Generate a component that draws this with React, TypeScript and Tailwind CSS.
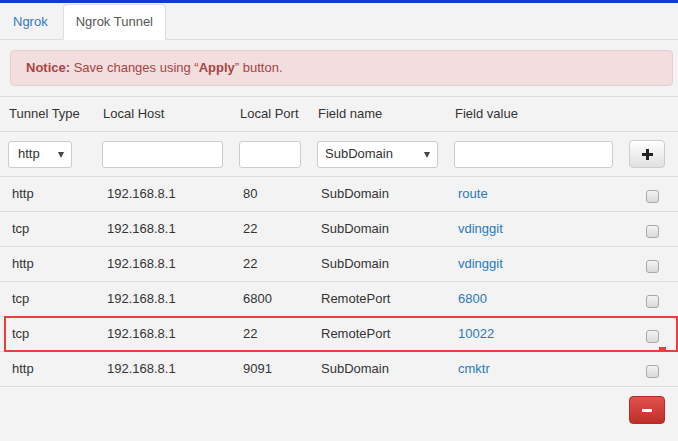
import React from "react";

const rows = [
  ["http", "192.168.8.1", "80", "SubDomain", "route"],
  ["tcp", "192.168.8.1", "22", "SubDomain", "vdinggit"],
  ["http", "192.168.8.1", "22", "SubDomain", "vdinggit"],
  ["tcp", "192.168.8.1", "6800", "RemotePort", "6800"],
  ["tcp", "192.168.8.1", "22", "RemotePort", "10022"],
  ["http", "192.168.8.1", "9091", "SubDomain", "cmktr"],
];

function Arrow() {
  return (
    <svg width="6" height="6" viewBox="0 0 6 6" className="absolute right-[7px] top-[10px]">
      <path d="M0 0 L6 0 L3 6 Z" fill="#444" />
    </svg>
  );
}

function Checkbox() {
  return (
    <div className="w-[13px] h-[13px] rounded-[3px] border border-[#a9a9a9] bg-gradient-to-b from-[#f4f4f4] to-[#d9d9d9] ml-[25px] mt-[4px]" />
  );
}

export default function App() {
  return (
    <div
      className="w-[678px] h-[441px] bg-[#f3f3f3] text-[#333] text-[13px] overflow-hidden"
      style={{ fontFamily: '"Liberation Sans", Arial, sans-serif' }}
    >
      <div className="h-[3px] bg-[#0c3fc8]" />
      {/* tabs */}
      <div className="flex items-end h-[37px] pt-[1px] border-b border-[#dddddd]">
        <div className="px-[13px] h-[35px] flex items-center text-[#337ab7] mr-[2px] mb-[0px]">Ngrok</div>
        <div className="px-[12px] h-[36px] mb-[-1px] flex items-center bg-white border border-[#dddddd] border-b-white rounded-t-[4px] text-[#555]">
          Ngrok Tunnel
        </div>
      </div>
      {/* alert */}
      <div className="mx-[10px] mt-[10px] mr-[5px] h-[36px] rounded-[4px] border border-[#ebccd1] bg-[#f2dede] text-[#a94442] flex items-center pl-[15px]">
        <span>
          <b>Notice:</b> Save changes using “<b>Apply</b>” button.
        </span>
      </div>
      {/* table */}
      <div className="relative mt-[10px]">
        <table className="table-fixed w-[678px] border-collapse">
          <colgroup>
            <col className="w-[94px]" />
            <col className="w-[137px]" />
            <col className="w-[78px]" />
            <col className="w-[137px]" />
            <col className="w-[175px]" />
            <col className="w-[57px]" />
          </colgroup>
          <thead>
            <tr className="h-[35px] border-t border-b border-[#dddddd]">
              {["Tunnel Type", "Local Host", "Local Port", "Field name", "Field value", ""].map((h, i) => (
                <th key={i} className="text-left font-normal pl-[9px] p-0 align-middle">
                  {h}
                </th>
              ))}
            </tr>
          </thead>
          <tbody>
            <tr className="h-[45px] border-b border-[#dddddd]">
              <td className="pl-[8px] align-middle">
                <div className="relative w-[64px] h-[27px] bg-white border border-[#cccccc] rounded-[3px] flex items-center pl-[9px]">
                  http
                  <Arrow />
                </div>
              </td>
              <td className="pl-[8px] align-middle">
                <div className="w-[121px] h-[27px] bg-white border border-[#cccccc] rounded-[3px]" />
              </td>
              <td className="pl-[8px] align-middle">
                <div className="w-[62px] h-[27px] bg-white border border-[#cccccc] rounded-[3px]" />
              </td>
              <td className="pl-[8px] align-middle">
                <div className="relative w-[121px] h-[27px] bg-white border border-[#cccccc] rounded-[3px] flex items-center pl-[7px]">
                  SubDomain
                  <Arrow />
                </div>
              </td>
              <td className="pl-[8px] align-middle">
                <div className="w-[159px] h-[27px] bg-white border border-[#cccccc] rounded-[3px]" />
              </td>
              <td className="pl-[8px] align-middle">
                <div className="w-[36px] h-[28px] rounded-[4px] border border-[#cccccc] bg-gradient-to-b from-[#ffffff] to-[#e0e0e0] flex items-center justify-center">
                  <svg width="11" height="11" viewBox="0 0 11 11">
                    <rect x="4" y="0" width="3" height="11" fill="#222" />
                    <rect x="0" y="4" width="11" height="3" fill="#222" />
                  </svg>
                </div>
              </td>
            </tr>
            {rows.map((r, i) => (
              <tr key={i} className="h-[35px] border-b border-[#dddddd]">
                <td className="pl-[12px] align-middle">{r[0]}</td>
                <td className="pl-[13px] align-middle">{r[1]}</td>
                <td className="pl-[12px] align-middle">{r[2]}</td>
                <td className="pl-[12px] align-middle">{r[3]}</td>
                <td className="pl-[12px] align-middle text-[#2a7ab9]">{r[4]}</td>
                <td className="align-middle">
                  <Checkbox />
                </td>
              </tr>
            ))}
          </tbody>
        </table>
        {/* annotation highlight */}
        <div className="absolute left-[4px] right-0 top-[220px] h-[36px] border-2 border-[#f03c3c]" />
        <div className="absolute left-[659px] top-[251px] w-[7px] h-[3px] bg-[#f03c3c]" />
        <div className="flex justify-end pr-[13px] pt-[9px]">
          <div className="w-[36px] h-[28px] rounded-[4px] border border-[#b52b27] bg-gradient-to-b from-[#e0524d] to-[#bf2d29] flex items-center justify-center">
            <div className="w-[10px] h-[3px] bg-white" />
          </div>
        </div>
      </div>
    </div>
  );
}
